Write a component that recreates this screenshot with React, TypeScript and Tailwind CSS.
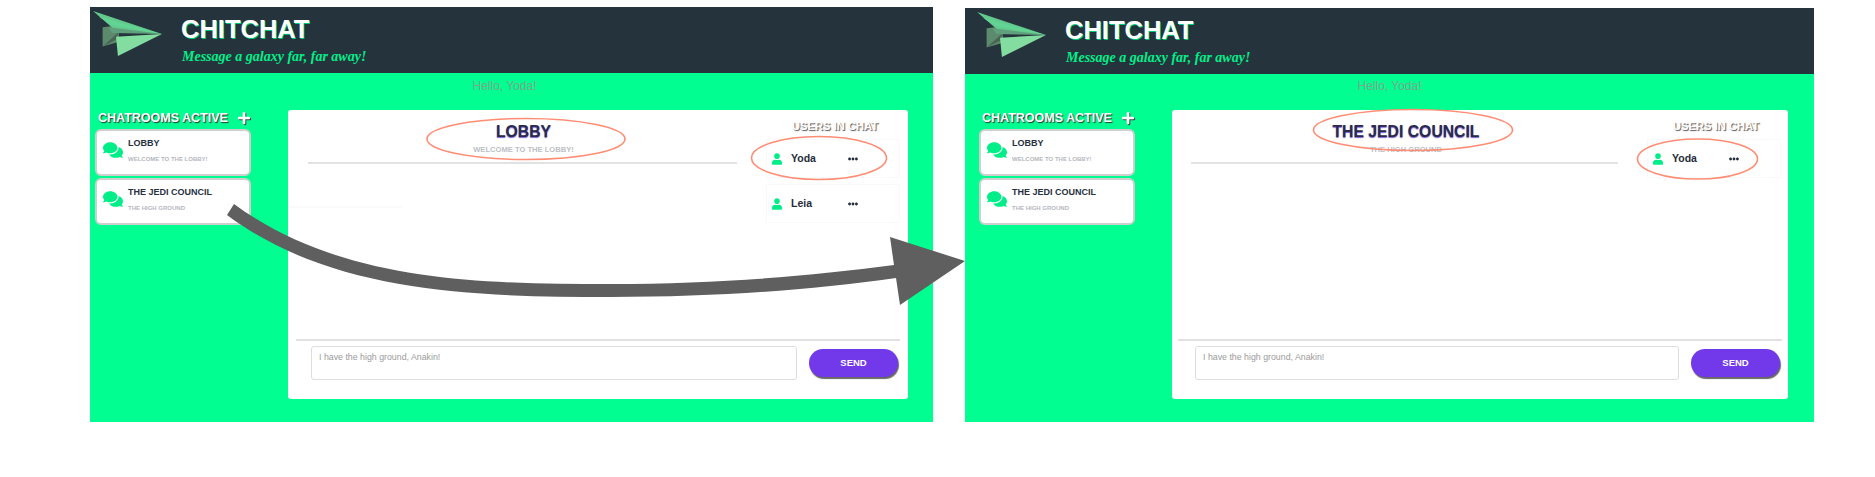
import { FaComments, FaEllipsisH, FaPlus, FaUser } from 'react-icons/fa'

const rooms = [
  { name: 'LOBBY', topic: 'WELCOME TO THE LOBBY!' },
  { name: 'THE JEDI COUNCIL', topic: 'THE HIGH GROUND' },
]

const Logo = () => (
  <svg viewBox="0 0 72 47" className="h-[45px] w-[69px]">
    <polygon points="10,17 27,15 27,32 10,37" fill="#5c8a6c" />
    <polygon points="10,37 27,22 24,30" fill="#4a6355" />
    <polygon points="0,0 72,24 24,21" fill="#63c98d" />
    <polygon points="6,6 72,24 20,15" fill="#62d493" />
    <polygon points="16,17 72,24 20,23" fill="#5f9f7c" />
    <polygon points="24,27 72,24 26,47" fill="#84dda0" />
  </svg>
)

const Header = ({ pad }: { pad: string }) => (
  <header className={`flex h-[66px] shrink-0 bg-[#25333d] ${pad}`}>
    <div className="mt-[4px] ml-[3px] w-[88px]">
      <Logo />
    </div>
    <div className="pt-[8px]">
      <h1 className="text-[25.5px] leading-[28px] font-bold text-white [text-shadow:1px_1px_0_#00c878]">CHITCHAT</h1>
      <p className="mt-[5px] ml-[1px] text-[14px] leading-[18px] font-bold text-[#00f08a] italic [font-family:'Liberation_Serif',serif]">
        Message a galaxy far, far away!
      </p>
    </div>
  </header>
)

const Sidebar = ({ pad }: { pad: string }) => (
  <aside className={`shrink-0 ${pad}`}>
    <div className="flex h-[16px] items-center pl-[3px] text-white">
      <span className="text-[12.5px] leading-none font-bold [text-shadow:1px_1px_1px_#333]">CHATROOMS ACTIVE</span>
      <FaPlus className="ml-[9px] text-[14px] [filter:drop-shadow(1px_1px_0_#444)]" />
    </div>
    <div className="mt-[3px] flex w-[156px] flex-col gap-[2px]">
      {rooms.map((room) => (
        <div key={room.name} className="flex h-[47px] rounded-[6px] border-2 border-[#cfcfcf] bg-white pt-[6px] pl-[6px]">
          <FaComments className="mt-[3px] text-[20px] text-[#00ee88]" />
          <div className="ml-[5px]">
            <div className="text-[9px] leading-[12px] font-bold text-[#28303f]">{room.name}</div>
            <div className="mt-[6px] text-[6px] leading-[8px] font-bold text-[#b5b8c0]">{room.topic}</div>
          </div>
        </div>
      ))}
    </div>
  </aside>
)

const UserRow = ({ name }: { name: string }) => (
  <div className="flex h-[39px] items-center border border-[#f9f9f9] pl-[5px]">
    <FaUser className="h-[12px] w-[10px] text-[#00ee88]" />
    <span className="ml-[9px] w-[57px] text-[10.5px] font-bold text-[#252c3a]">{name}</span>
    <FaEllipsisH className="text-[10px] text-[#252c3a]" />
  </div>
)

type ChatProps = {
  title: string
  topic: string
  users: string[]
  titleGap: string
  chatCol: string
  usersCol: string
  lineGap: string
  inputBox: string
  sendGap: string
}

const ChatPanel = ({ title, topic, users, titleGap, chatCol, usersCol, lineGap, inputBox, sendGap }: ChatProps) => (
  <main className="flex h-[289px] min-w-0 flex-1 flex-col rounded-[3px] bg-white">
    <div className="flex flex-1">
      <div className={chatCol}>
        <div className={`text-center ${titleGap}`}>
          <h2 className="text-[15.75px] leading-[18px] font-bold text-[#2a2a4a] [text-shadow:0_1px_1px_#7a5fd0]">{title}</h2>
          <p className="mt-[4px] text-[7.6px] leading-[10px] font-bold text-[#bcbfc4]">{topic}</p>
        </div>
        <div className="mt-[7px] h-[2px] bg-[#e2e2e2]" />
      </div>
      <div className={usersCol}>
        <div className="pt-[10px] pl-[26px] text-[11.2px] leading-[12px] font-bold text-white [text-shadow:1px_1px_1px_#555]">USERS IN CHAT</div>
        <div className="mt-[7px] flex flex-col gap-[6px]">
          {users.map((user) => (
            <UserRow key={user} name={user} />
          ))}
        </div>
      </div>
    </div>
    <div className={`h-[2px] bg-[#e2e2e2] ${lineGap}`} />
    <div className="mt-[5px] mb-[19px] flex items-start pl-[23px]">
      <div className={`h-[34px] rounded-[3px] border border-[#dedede] px-[7px] pt-[3px] text-[8.8px] leading-[14px] text-[#9b9b9b] ${inputBox}`}>
        I have the high ground, Anakin!
      </div>
      <button className={`mt-[3px] h-[28px] w-[89px] rounded-full bg-[#7239ea] text-[9.5px] font-bold text-white shadow-[1px_2px_1px_#666] ${sendGap}`}>
        SEND
      </button>
    </div>
  </main>
)

const Overlay = () => (
  <svg viewBox="0 0 1875 477" className="pointer-events-none absolute inset-0 h-[477px] w-[1875px]">
    <ellipse cx="526" cy="139" rx="99" ry="20.5" fill="none" stroke="#ff8d75" strokeWidth="1.6" />
    <ellipse cx="819" cy="158" rx="67.5" ry="21.5" fill="none" stroke="#ff8d75" strokeWidth="1.6" />
    <ellipse cx="1413" cy="130" rx="99.5" ry="20.5" fill="none" stroke="#ff8d75" strokeWidth="1.6" />
    <ellipse cx="1697.5" cy="159" rx="60" ry="20" fill="none" stroke="#ff8d75" strokeWidth="1.6" />
    <path d="M288 207 H402" stroke="#f5f5f5" strokeWidth="1" />
    <path
      d="M234 204 C 340 282, 480 284, 610 284 C 720 284, 810 276, 894 265 L 890 237 L 965 261 L 900 305 L 896 278 C 810 290, 720 297, 610 297 C 470 297, 330 292, 227 215 Z"
      fill="#5f5f5f"
    />
  </svg>
)

const App = () => (
  <div className="relative h-[477px] w-[1875px] overflow-hidden bg-white [font-family:'Liberation_Sans',Arial,sans-serif]">
    <div className="flex items-start pl-[90px]">
      <section className="mt-[7px] flex h-[415px] w-[843px] shrink-0 flex-col bg-[#00ff90]">
        <Header pad="pl-0" />
        <p className="pt-[6px] pr-[14px] text-center text-[12px] leading-[14px] text-[#7ba78d]">Hello, Yoda!</p>
        <div className="mt-[17px] flex items-start pr-[25px]">
          <Sidebar pad="w-[198px] pl-[5px]" />
          <ChatPanel
            title="LOBBY"
            topic="WELCOME TO THE LOBBY!"
            users={['Yoda', 'Leia']}
            titleGap="pt-[13px] pl-[2px]"
            chatCol="ml-[20px] w-[429px]"
            usersCol="ml-[29px] w-[134px]"
            lineGap="mx-[8px]"
            inputBox="w-[486px]"
            sendGap="ml-[12px]"
          />
        </div>
      </section>
      <section className="mt-[8px] ml-[32px] flex h-[414px] w-[849px] shrink-0 flex-col bg-[#00ff90]">
        <Header pad="pl-[9px]" />
        <p className="pt-[5px] text-center text-[12px] leading-[14px] text-[#7ba78d]">Hello, Yoda!</p>
        <div className="mt-[17px] flex items-start pr-[26px]">
          <Sidebar pad="w-[207px] pl-[14px]" />
          <ChatPanel
            title="THE JEDI COUNCIL"
            topic="THE HIGH GROUND"
            users={['Yoda']}
            titleGap="pt-[13px] pl-[3px]"
            chatCol="ml-[19px] w-[427px]"
            usersCol="ml-[29px] w-[134px]"
            lineGap="mx-[6px]"
            inputBox="w-[484px]"
            sendGap="ml-[12px]"
          />
        </div>
      </section>
    </div>
    <Overlay />
  </div>
)

export default App
